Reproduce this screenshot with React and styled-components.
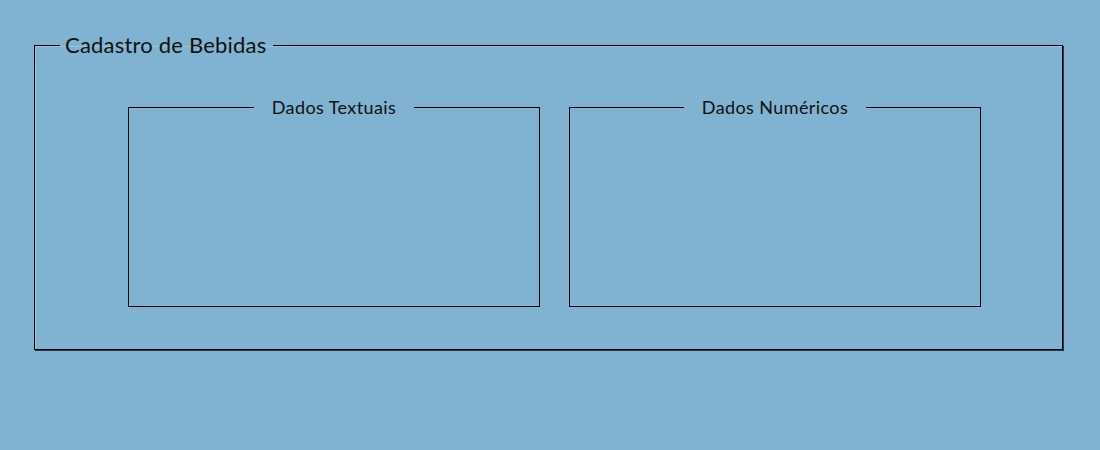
import React from "react";
import styled, { createGlobalStyle } from "styled-components";

const GlobalStyle = createGlobalStyle`
	html,
	body {
		margin: 0;
		background: #80b2d1;
	}
	body {
		font-family: Lato, "Open Sans", "Liberation Sans", sans-serif;
		color: #111;
	}
`;

const Page = styled.main`
	padding: 32px 37px 0 34px;
	height: 450px;
	box-sizing: border-box;
`;

const Group = styled.fieldset`
	box-sizing: border-box;
	margin: 0;
	padding: 0;
	min-width: 0;
	border: 1px solid #000;
	box-shadow: 1px 1px 0 #243746, inset 1px 1px 0 rgba(255, 255, 255, 0.22);
	width: 1029px;
	height: 318px;
`;

const GroupTitle = styled.legend`
	margin-left: 25px;
	padding: 0 7px 0 5px;
	font-size: 22px;
	line-height: 26px;
	letter-spacing: 0.2px;
`;

const Row = styled.div`
	display: flex;
	gap: 29px;
	padding: 38px 0 0 93px;
`;

const Section = styled.fieldset`
	box-sizing: border-box;
	margin: 0;
	padding: 0;
	min-width: 0;
	border: 1px solid #000;
	width: 412px;
	height: 211px;
`;

const SectionTitle = styled.legend`
	margin: 0 auto;
	padding: 0 18px;
	font-size: 18px;
	line-height: 22px;
	letter-spacing: 0.4px;
`;

const sections = ["Dados Textuais", "Dados Numéricos"];

const App = () => (
	<>
		<GlobalStyle />
		<Page>
			<Group>
				<GroupTitle>Cadastro de Bebidas</GroupTitle>
				<Row>
					{sections.map((title) => (
						<Section key={title}>
							<SectionTitle>{title}</SectionTitle>
						</Section>
					))}
				</Row>
			</Group>
		</Page>
	</>
);

export default App;
